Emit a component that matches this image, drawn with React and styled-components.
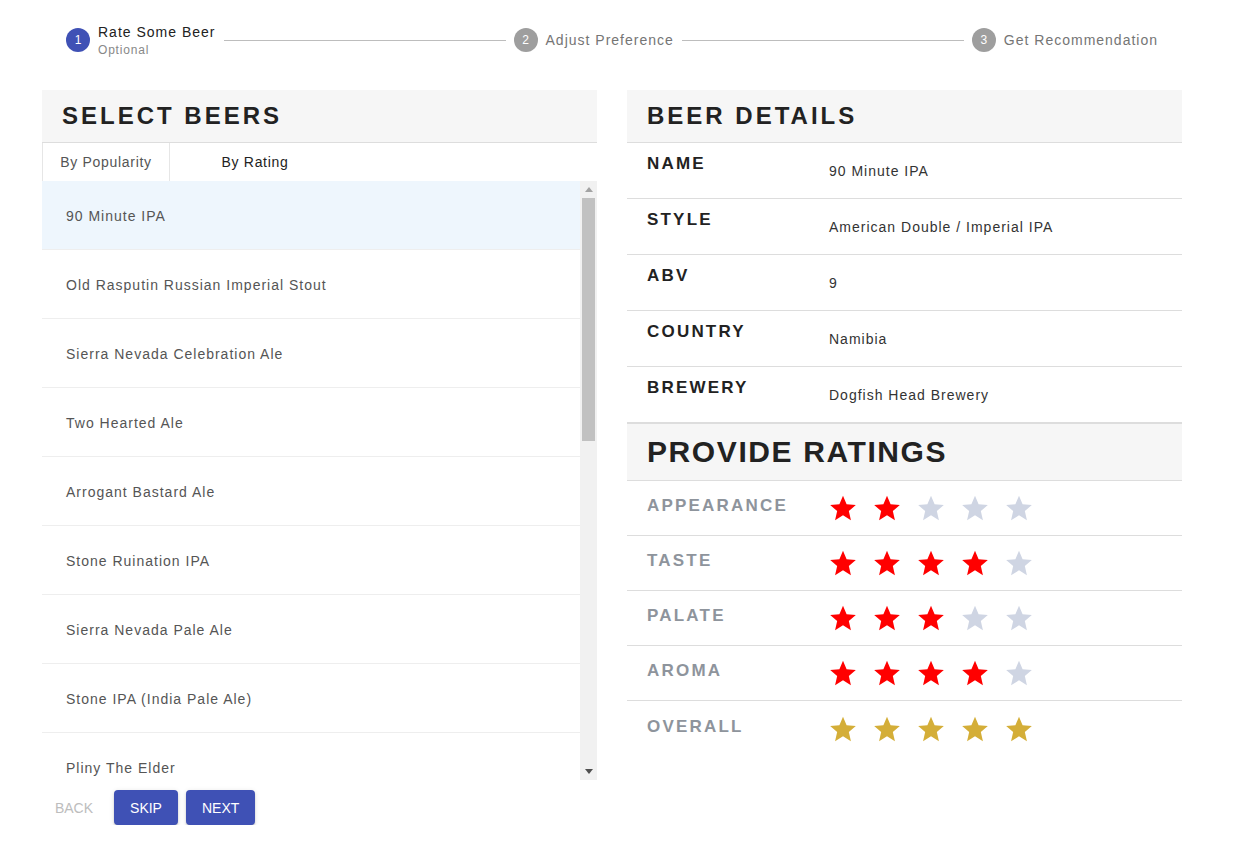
import React from 'react'
import styled, { createGlobalStyle } from 'styled-components'

const GlobalStyle = createGlobalStyle`
  body {
    margin: 0;
    background: #fff;
    font-family: "Liberation Sans", Arial, sans-serif;
    color: #222;
  }
`;

const Page = styled.div`
    width: 1140px;
    margin-left: 42px;
`;

const Stepper = styled.div`
    display: flex;
    align-items: center;
    padding: 22px 24px;
`;

const Step = styled.div`
    display: flex;
    align-items: center;
    gap: 8px;
`;

const Circle = styled.div`
    width: 24px;
    height: 24px;
    border-radius: 50%;
    background: ${p => (p.active ? '#3f51b5' : '#9e9e9e')};
    color: #fff;
    font-size: 12px;
    display: flex;
    align-items: center;
    justify-content: center;
`;

const StepLabel = styled.div`
    display: flex;
    flex-direction: column;
`;

const StepName = styled.span`
    font-size: 14px;
    line-height: 20px;
    letter-spacing: 1px;
    color: ${p => (p.active ? '#222' : '#757575')};
`;

const StepHint = styled.span`
    font-size: 12px;
    line-height: 16px;
    letter-spacing: 0.8px;
    color: #888;
`;

const Connector = styled.div`
    flex: 1;
    border-top: 1px solid #bdbdbd;
    margin: 0 8px;
`;

const Columns = styled.div`
    display: grid;
    grid-template-columns: 555px 555px;
    column-gap: 30px;
    margin-top: 10px;
    align-items: start;
`;

const Panel = styled.div`
    display: flex;
    flex-direction: column;
`;

const Header = styled.div`
    background: #f6f6f6;
    height: ${p => (p.big ? '58px' : '53px')};
    border-bottom: 1px solid #ddd;
    border-top: ${p => (p.big ? '1px solid #ddd' : 'none')};
    box-sizing: border-box;
    display: flex;
    align-items: center;
    padding-left: 20px;
`;

const Title = styled.h2`
    margin: 0;
    font-size: ${p => (p.big ? '30px' : '24px')};
    letter-spacing: ${p => (p.big ? '1.6px' : '3px')};
    font-weight: 700;
    color: #222;
`;

const Tabs = styled.div`
    display: flex;
    height: 38px;
`;

const Tab = styled.div`
    width: ${p => p.w}px;
    box-sizing: border-box;
    display: flex;
    align-items: center;
    justify-content: center;
    font-size: 14px;
    letter-spacing: 0.7px;
    color: ${p => (p.active ? '#555' : '#222')};
    background: #fff;
    border-left: ${p => (p.active ? '1px solid #e6e6e6' : 'none')};
    border-right: ${p => (p.active ? '1px solid #e6e6e6' : 'none')};
`;

const ListBox = styled.div`
    display: flex;
    height: 599px;
`;

const Items = styled.div`
    flex: 1;
    overflow: hidden;
`;

const Track = styled.div`
    width: 17px;
    background: #f1f1f1;
    display: flex;
    flex-direction: column;
    align-items: center;
`;

const Arrow = styled.div`
    height: 17px;
    width: 17px;
    display: flex;
    align-items: center;
    justify-content: center;
`;

const Thumb = styled.div`
    width: 13px;
    height: 243px;
    background: #c1c1c1;
`;

const Spacer = styled.div`
    flex: 1;
`;

const Item = styled.div`
    height: 69px;
    box-sizing: border-box;
    border-bottom: 1px solid #eee;
    display: flex;
    align-items: center;
    padding: 2px 0 0 24px;
    font-size: 14px;
    letter-spacing: 1px;
    color: #555;
    background: ${p => (p.selected ? '#eef6fd' : '#fff')};
`;

const Actions = styled.div`
    display: flex;
    gap: 8px;
    margin-top: 10px;
`;

const Button = styled.button`
    min-width: 64px;
    height: 35px;
    padding: ${p => (p.variant === 'text' ? '6px 8px' : '6px 16px')};
    box-sizing: border-box;
    border: none;
    border-radius: 4px;
    font-family: "Liberation Sans", Arial, sans-serif;
    font-size: 14px;
    font-weight: 500;
    text-transform: uppercase;
    cursor: pointer;
    background: ${p => (p.variant === 'text' ? 'transparent' : '#3f51b5')};
    color: ${p => (p.disabled ? '#bdbdbd' : '#fff')};
    box-shadow: ${p => (p.variant === 'text' ? 'none' : '0 3px 1px -2px rgba(0,0,0,.2), 0 2px 2px 0 rgba(0,0,0,.14), 0 1px 5px 0 rgba(0,0,0,.12)')};
`;

const Row = styled.div`
    display: flex;
    align-items: ${p => (p.rating ? 'center' : 'flex-start')};
    height: ${p => (p.rating ? '55px' : '56px')};
    box-sizing: border-box;
    border-bottom: ${p => (p.last ? 'none' : '1px solid #ddd')};
    padding-left: 20px;
`;

const Label = styled.div`
    width: 182px;
    font-size: 17px;
    font-weight: 700;
    letter-spacing: 2.2px;
    line-height: 20px;
    color: ${p => (p.muted ? '#8e949c' : '#222')};
    padding-top: ${p => (p.muted ? '0' : '11px')};
    margin-bottom: ${p => (p.muted ? '4px' : '0')};
`;

const Value = styled.div`
    font-size: 14px;
    letter-spacing: 1px;
    line-height: 20px;
    color: #333;
    padding-top: 18px;
`;

const Stars = styled.div`
    display: flex;
    gap: 16px;
`;

const beers = [
    '90 Minute IPA',
    'Old Rasputin Russian Imperial Stout',
    'Sierra Nevada Celebration Ale',
    'Two Hearted Ale',
    'Arrogant Bastard Ale',
    'Stone Ruination IPA',
    'Sierra Nevada Pale Ale',
    'Stone IPA (India Pale Ale)',
    'Pliny The Elder',
];

const details = [
    ['NAME', '90 Minute IPA'],
    ['STYLE', 'American Double / Imperial IPA'],
    ['ABV', '9'],
    ['COUNTRY', 'Namibia'],
    ['BREWERY', 'Dogfish Head Brewery'],
];

const ratings = [
    ['APPEARANCE', 2],
    ['TASTE', 4],
    ['PALATE', 3],
    ['AROMA', 4],
    ['OVERALL', 5, true],
];

const Star = ({ color }) => (
    <svg width="28" height="28" viewBox="0 0 24 24">
        <path fill={color} d="M12 1.5l3.09 7.26 7.91.69-6 5.2 1.8 7.75L12 18.27 5.2 22.4 7 14.65l-6-5.2 7.91-.69z" />
    </svg>
);

const App = () => {
    return (
        <Page>
            <GlobalStyle />
            <Stepper>
                <Step>
                    <Circle active>1</Circle>
                    <StepLabel>
                        <StepName active>Rate Some Beer</StepName>
                        <StepHint>Optional</StepHint>
                    </StepLabel>
                </Step>
                <Connector />
                <Step>
                    <Circle>2</Circle>
                    <StepName>Adjust Preference</StepName>
                </Step>
                <Connector />
                <Step>
                    <Circle>3</Circle>
                    <StepName>Get Recommendation</StepName>
                </Step>
            </Stepper>
            <Columns>
                <Panel>
                    <Header><Title>SELECT BEERS</Title></Header>
                    <Tabs>
                        <Tab w={128} active>By Popularity</Tab>
                        <Tab w={170}>By Rating</Tab>
                    </Tabs>
                    <ListBox>
                        <Items>
                            {beers.map((b, i) => (
                                <Item key={b} selected={i === 0}>{b}</Item>
                            ))}
                        </Items>
                        <Track>
                            <Arrow>
                                <svg width="8" height="5"><path d="M0 5L4 0L8 5Z" fill="#a3a3a3" /></svg>
                            </Arrow>
                            <Thumb />
                            <Spacer />
                            <Arrow>
                                <svg width="8" height="5"><path d="M0 0L8 0L4 5Z" fill="#505050" /></svg>
                            </Arrow>
                        </Track>
                    </ListBox>
                    <Actions>
                        <Button variant="text" disabled>Back</Button>
                        <Button>Skip</Button>
                        <Button>Next</Button>
                    </Actions>
                </Panel>
                <Panel>
                    <Header><Title>BEER DETAILS</Title></Header>
                    {details.map(([k, v]) => (
                        <Row key={k}>
                            <Label>{k}</Label>
                            <Value>{v}</Value>
                        </Row>
                    ))}
                    <Header big><Title big>PROVIDE RATINGS</Title></Header>
                    {ratings.map(([k, n, gold], i) => (
                        <Row key={k} rating last={i === ratings.length - 1}>
                            <Label muted>{k}</Label>
                            <Stars>
                                {[0, 1, 2, 3, 4].map(s => (
                                    <Star key={s} color={gold ? '#d4ae38' : s < n ? '#ff0000' : '#cfd5e3'} />
                                ))}
                            </Stars>
                        </Row>
                    ))}
                </Panel>
            </Columns>
        </Page>
    )
}

export default App
